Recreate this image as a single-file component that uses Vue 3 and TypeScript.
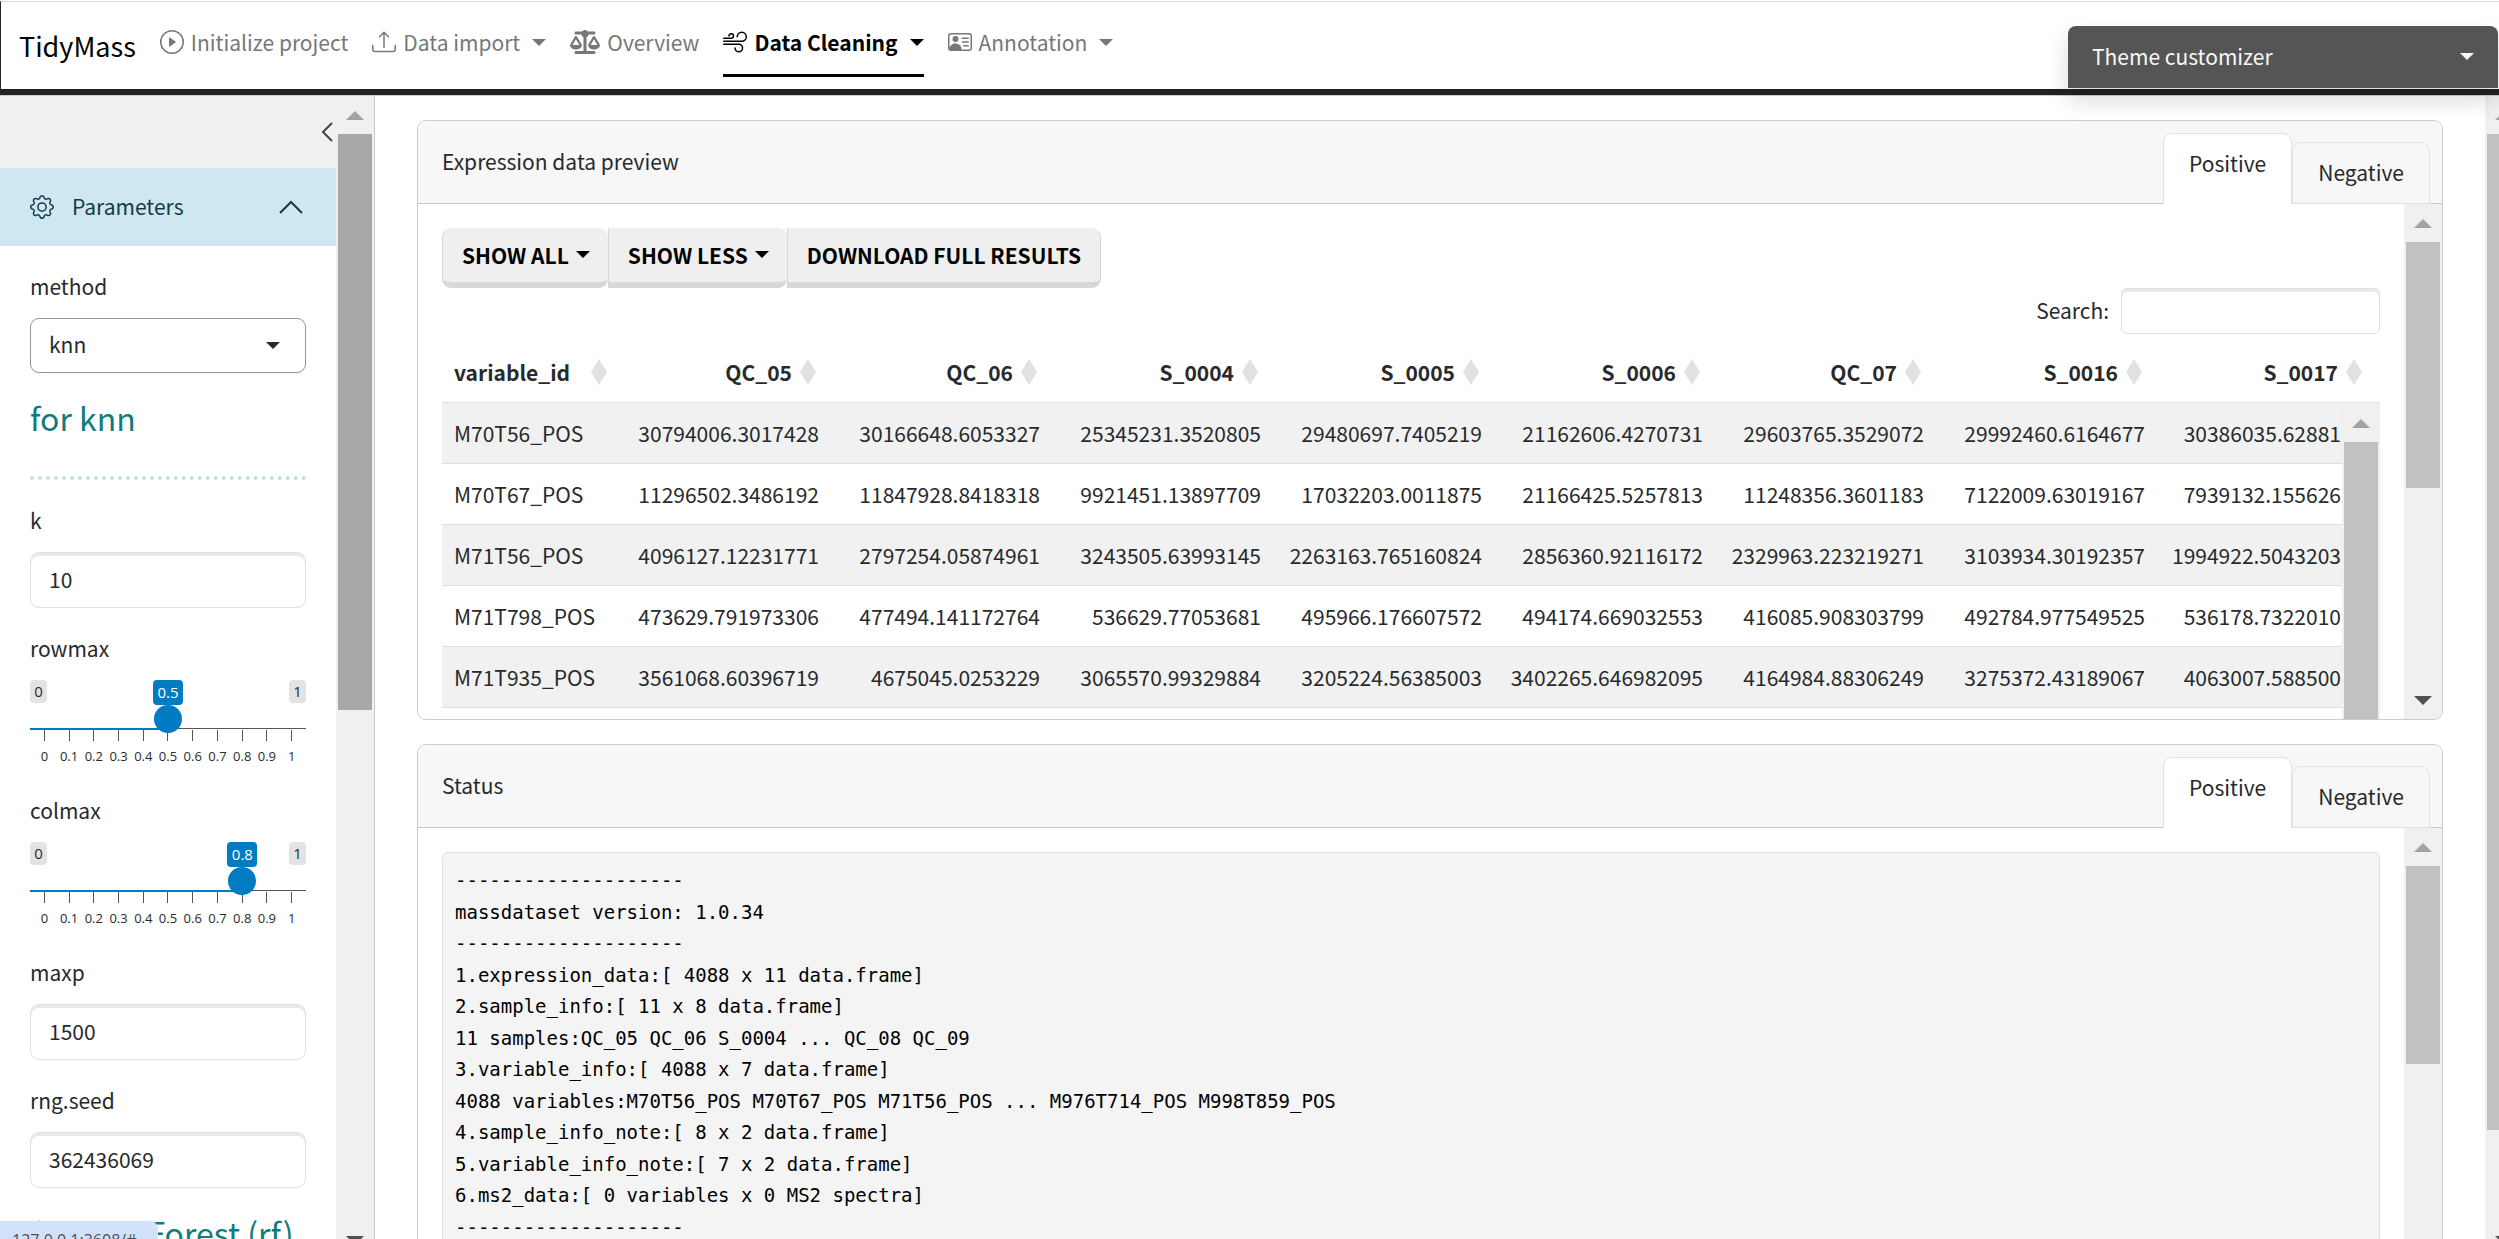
<script setup lang="ts">
import { ref } from 'vue'

interface NavItem {
  label: string
  viewBox: string
  iconWidth: number
  paths: string[]
  menu: boolean
  active: boolean
}

const navItems: NavItem[] = [
  {
    label: 'Initialize project',
    viewBox: '0 0 16 16',
    iconWidth: 24,
    paths: [
      'M8 15A7 7 0 1 1 8 1a7 7 0 0 1 0 14m0 1A8 8 0 1 0 8 0a8 8 0 0 0 0 16',
      'M6.271 5.055a.5.5 0 0 1 .52.038l3.5 2.5a.5.5 0 0 1 0 .814l-3.5 2.5A.5.5 0 0 1 6 10.5v-5a.5.5 0 0 1 .271-.445',
    ],
    menu: false,
    active: false,
  },
  {
    label: 'Data import',
    viewBox: '0 0 16 16',
    iconWidth: 24,
    paths: [
      'M.5 9.9a.5.5 0 0 1 .5.5v2.5a1 1 0 0 0 1 1h12a1 1 0 0 0 1-1v-2.5a.5.5 0 0 1 1 0v2.5a2 2 0 0 1-2 2H2a2 2 0 0 1-2-2v-2.5a.5.5 0 0 1 .5-.5',
      'M7.646 1.146a.5.5 0 0 1 .708 0l3 3a.5.5 0 0 1-.708.708L8.5 2.707V11.5a.5.5 0 0 1-1 0V2.707L5.354 4.854a.5.5 0 1 1-.708-.708z',
    ],
    menu: true,
    active: false,
  },
  {
    label: 'Overview',
    viewBox: '0 0 640 512',
    iconWidth: 30,
    paths: [
      'M384 32H512c17.7 0 32 14.3 32 32s-14.3 32-32 32H398.4c-5.2 25.8-22.9 47.1-46.4 57.3V448H512c17.7 0 32 14.3 32 32s-14.3 32-32 32H320 128c-17.7 0-32-14.3-32-32s14.3-32 32-32H288V153.3c-23.5-10.3-41.2-31.6-46.4-57.3H128c-17.7 0-32-14.3-32-32s14.3-32 32-32H256c14.6-19.4 37.8-32 64-32s49.4 12.6 64 32zm55.6 288H584.4L512 195.8 439.6 320zM512 416c-62.9 0-115.2-34-126-78.9c-2.6-11 1-22.3 6.7-32.1l95.2-163.2c5-8.6 14.2-13.8 24.1-13.8s19.1 5.3 24.1 13.8l95.2 163.2c5.7 9.8 9.3 21.1 6.7 32.1C627.2 382 574.9 416 512 416zM126.8 195.8L54.4 320H199.3L126.8 195.8zM.9 337.1c-2.6-11 1-22.3 6.7-32.1l95.2-163.2c5-8.6 14.2-13.8 24.1-13.8s19.1 5.3 24.1 13.8l95.2 163.2c5.7 9.8 9.3 21.1 6.7 32.1C241.9 382 189.7 416 126.8 416S11.7 382 .9 337.1z',
    ],
    menu: false,
    active: false,
  },
  {
    label: 'Data Cleaning',
    viewBox: '0 0 16 16',
    iconWidth: 24,
    paths: [
      'M12.5 2A2.5 2.5 0 0 0 10 4.5a.5.5 0 0 1-1 0A3.5 3.5 0 1 1 12.5 8H.5a.5.5 0 0 1 0-1h12a2.5 2.5 0 0 0 0-5m-7 1a1 1 0 0 0-1 1 .5.5 0 0 1-1 0 2 2 0 1 1 2 2h-5a.5.5 0 0 1 0-1h5a1 1 0 0 0 0-2M0 9.5A.5.5 0 0 1 .5 9h10.042a3 3 0 1 1-3 3 .5.5 0 0 1 1 0 2 2 0 1 0 2-2H.5a.5.5 0 0 1-.5-.5',
    ],
    menu: true,
    active: true,
  },
  {
    label: 'Annotation',
    viewBox: '0 0 16 16',
    iconWidth: 24,
    paths: [
      'M5 8a2 2 0 1 0 0-4 2 2 0 0 0 0 4m4-2.5a.5.5 0 0 1 .5-.5h4a.5.5 0 0 1 0 1h-4a.5.5 0 0 1-.5-.5M9 8a.5.5 0 0 1 .5-.5h4a.5.5 0 0 1 0 1h-4A.5.5 0 0 1 9 8m1 2.5a.5.5 0 0 1 .5-.5h3a.5.5 0 0 1 0 1h-3a.5.5 0 0 1-.5-.5',
      'M2 2a2 2 0 0 0-2 2v8a2 2 0 0 0 2 2h12a2 2 0 0 0 2-2V4a2 2 0 0 0-2-2zM1 4a1 1 0 0 1 1-1h12a1 1 0 0 1 1 1v8a1 1 0 0 1-1 1H8.96q.04-.245.04-.5C9 10.567 7.21 9 5 9c-2.086 0-3.8 1.398-3.984 3.181A1 1 0 0 1 1 12z',
    ],
    menu: true,
    active: false,
  },
]

const method = ref('knn')
const k = ref('10')
const maxp = ref('1500')
const seed = ref('362436069')
const search = ref('')

const sliders = ref([
  { name: 'rowmax', value: 0.5 },
  { name: 'colmax', value: 0.8 },
])
const ticks = ['0', '0.1', '0.2', '0.3', '0.4', '0.5', '0.6', '0.7', '0.8', '0.9', '1']

// The handle is 28px wide, so its centre travels over the width less 28px.
const handleLeft = (value: number): string => `calc(14px + (100% - 28px) * ${value})`

const tabs = ['Positive', 'Negative']
const previewTab = ref('Positive')
const statusTab = ref('Positive')

const columns = ['variable_id', 'QC_05', 'QC_06', 'S_0004', 'S_0005', 'S_0006', 'QC_07', 'S_0016', 'S_0017']
const rows: string[][] = [
  ['M70T56_POS', '30794006.3017428', '30166648.6053327', '25345231.3520805', '29480697.7405219', '21162606.4270731', '29603765.3529072', '29992460.6164677', '30386035.62881'],
  ['M70T67_POS', '11296502.3486192', '11847928.8418318', '9921451.13897709', '17032203.0011875', '21166425.5257813', '11248356.3601183', '7122009.63019167', '7939132.155626'],
  ['M71T56_POS', '4096127.12231771', '2797254.05874961', '3243505.63993145', '2263163.765160824', '2856360.92116172', '2329963.223219271', '3103934.30192357', '1994922.5043203'],
  ['M71T798_POS', '473629.791973306', '477494.141172764', '536629.77053681', '495966.176607572', '494174.669032553', '416085.908303799', '492784.977549525', '536178.7322010'],
  ['M71T935_POS', '3561068.60396719', '4675045.0253229', '3065570.99329884', '3205224.56385003', '3402265.646982095', '4164984.88306249', '3275372.43189067', '4063007.588500'],
]

const rule = '-'.repeat(20)
const statusText = [
  rule,
  'massdataset version: 1.0.34',
  rule,
  '1.expression_data:[ 4088 x 11 data.frame]',
  '2.sample_info:[ 11 x 8 data.frame]',
  '11 samples:QC_05 QC_06 S_0004 ... QC_08 QC_09',
  '3.variable_info:[ 4088 x 7 data.frame]',
  '4088 variables:M70T56_POS M70T67_POS M71T56_POS ... M976T714_POS M998T859_POS',
  '4.sample_info_note:[ 8 x 2 data.frame]',
  '5.variable_info_note:[ 7 x 2 data.frame]',
  '6.ms2_data:[ 0 variables x 0 MS2 spectra]',
  rule,
].join('\n')
</script>

<template>
  <div class="shell">
    <header class="topbar">
      <a class="brand" href="#">TidyMass</a>
      <nav class="nav">
        <a v-for="item in navItems" :key="item.label" href="#" class="nav-item" :class="{ active: item.active }">
          <svg class="nav-icon" :viewBox="item.viewBox" :width="item.iconWidth" height="24" fill="currentColor" aria-hidden="true">
            <path v-for="d in item.paths" :key="d" :d="d" />
          </svg>
          <span>{{ item.label }}</span>
          <i v-if="item.menu" class="caret nav-caret"></i>
        </a>
      </nav>
    </header>

    <button type="button" class="customizer">
      <span>Theme customizer</span>
      <i class="caret"></i>
    </button>

    <div class="workspace">
      <aside class="sidebar">
        <div class="sidebar-scroll">
          <div class="sidebar-top">
            <button type="button" class="collapse" aria-label="Toggle sidebar">
              <svg viewBox="0 0 12 20" width="12" height="20" fill="none" stroke="#444" stroke-width="2" aria-hidden="true">
                <path d="M11 1 2 10l9 9" />
              </svg>
            </button>
          </div>
          <button type="button" class="accordion">
            <svg viewBox="0 0 16 16" width="24" height="24" fill="currentColor" aria-hidden="true">
              <path d="M8 4.754a3.246 3.246 0 1 0 0 6.492 3.246 3.246 0 0 0 0-6.492M5.754 8a2.246 2.246 0 1 1 4.492 0 2.246 2.246 0 0 1-4.492 0" />
              <path d="M9.796 1.343c-.527-1.79-3.065-1.79-3.592 0l-.094.319a.873.873 0 0 1-1.255.52l-.292-.16c-1.64-.892-3.433.902-2.54 2.541l.159.292a.873.873 0 0 1-.52 1.255l-.319.094c-1.79.527-1.79 3.065 0 3.592l.319.094a.873.873 0 0 1 .52 1.255l-.16.292c-.892 1.64.901 3.434 2.541 2.54l.292-.159a.873.873 0 0 1 1.255.52l.094.319c.527 1.79 3.065 1.79 3.592 0l.094-.319a.873.873 0 0 1 1.255-.52l.292.16c1.64.893 3.434-.902 2.54-2.541l-.159-.292a.873.873 0 0 1 .52-1.255l.319-.094c1.79-.527 1.79-3.065 0-3.592l-.319-.094a.873.873 0 0 1-.52-1.255l.16-.292c.893-1.64-.902-3.433-2.541-2.54l-.292.159a.873.873 0 0 1-1.255-.52zm-2.633.283c.246-.835 1.428-.835 1.674 0l.094.319a1.873 1.873 0 0 0 2.693 1.115l.291-.16c.764-.415 1.6.42 1.184 1.185l-.159.292a1.873 1.873 0 0 0 1.116 2.692l.318.094c.835.246.835 1.428 0 1.674l-.319.094a1.873 1.873 0 0 0-1.115 2.693l.16.291c.415.764-.42 1.6-1.185 1.184l-.291-.159a1.873 1.873 0 0 0-2.693 1.116l-.094.318c-.246.835-1.428.835-1.674 0l-.094-.319a1.873 1.873 0 0 0-2.692-1.115l-.292.16c-.764.415-1.6-.42-1.184-1.185l.159-.291A1.873 1.873 0 0 0 1.945 8.93l-.319-.094c-.835-.246-.835-1.428 0-1.674l.319-.094A1.873 1.873 0 0 0 3.06 4.377l-.16-.292c-.415-.764.42-1.6 1.185-1.184l.292.159a1.873 1.873 0 0 0 2.692-1.115z" />
            </svg>
            <span class="accordion-title">Parameters</span>
            <svg viewBox="0 0 24 14" width="24" height="14" fill="none" stroke="currentColor" stroke-width="2" aria-hidden="true">
              <path d="M1 13 12 2l11 11" />
            </svg>
          </button>

          <form class="params" @submit.prevent>
            <div class="field">
              <label for="method">method</label>
              <div class="select-wrap">
                <select id="method" v-model="method">
                  <option value="knn">knn</option>
                </select>
                <i class="caret"></i>
              </div>
            </div>

            <h4>for knn</h4>
            <hr />

            <div class="field">
              <label for="k">k</label>
              <input id="k" v-model="k" class="text-input" type="text" />
            </div>

            <div v-for="slider in sliders" :key="slider.name" class="field">
              <label :for="slider.name">{{ slider.name }}</label>
              <div class="slider">
                <div class="limits">
                  <span>0</span>
                  <span>1</span>
                </div>
                <span class="bubble" :style="{ left: handleLeft(slider.value) }">{{ slider.value }}</span>
                <input :id="slider.name" v-model.number="slider.value" type="range" min="0" max="1" step="0.1" />
                <div class="rail">
                  <div class="rail-fill" :style="{ width: handleLeft(slider.value) }"></div>
                </div>
                <div class="ticks">
                  <span v-for="tick in ticks" :key="tick">{{ tick }}</span>
                </div>
              </div>
            </div>

            <div class="field">
              <label for="maxp">maxp</label>
              <input id="maxp" v-model="maxp" class="text-input" type="text" />
            </div>
            <div class="field">
              <label for="seed">rng.seed</label>
              <input id="seed" v-model="seed" class="text-input" type="text" />
            </div>

            <h4>for missForest (rf)</h4>
          </form>
        </div>
        <div class="scrollbar" aria-hidden="true">
          <i class="arrow up"></i>
          <div class="thumb hovered" style="height: 576px"></div>
          <i class="arrow down"></i>
        </div>
      </aside>

      <main class="main">
        <section class="card">
          <div class="card-header">
            <span class="card-title">Expression data preview</span>
            <div class="tabs" role="tablist">
              <button v-for="tab in tabs" :key="tab" type="button" role="tab" class="tab" :class="{ selected: tab === previewTab }" @click="previewTab = tab">{{ tab }}</button>
            </div>
          </div>
          <div class="card-body">
            <div class="card-content">
              <div class="button-group">
                <button type="button">SHOW ALL<i class="caret"></i></button>
                <button type="button">SHOW LESS<i class="caret"></i></button>
                <button type="button">DOWNLOAD FULL RESULTS</button>
              </div>
              <div class="search">
                <label for="search">Search:</label>
                <input id="search" v-model="search" type="search" />
              </div>
              <div class="table-wrap">
                <table>
                  <colgroup>
                    <col class="col-id" />
                    <col class="col-first" />
                    <col v-for="n in 6" :key="n" class="col-sample" />
                    <col />
                  </colgroup>
                  <thead>
                    <tr>
                      <th v-for="column in columns" :key="column" scope="col">
                        <div class="th-inner">
                          <span>{{ column }}</span>
                          <svg viewBox="0 0 16 26" width="16" height="26" fill="#e1e1e1" aria-hidden="true">
                            <path d="M8 0l8 13-8 13L0 13z" />
                          </svg>
                        </div>
                      </th>
                    </tr>
                  </thead>
                  <tbody>
                    <tr v-for="row in rows" :key="row[0]">
                      <td v-for="(cell, i) in row" :key="i">{{ cell }}</td>
                    </tr>
                  </tbody>
                </table>
                <div class="scrollbar table-scrollbar" aria-hidden="true">
                  <i class="arrow up"></i>
                  <div class="thumb fill"></div>
                </div>
              </div>
            </div>
            <div class="scrollbar" aria-hidden="true">
              <i class="arrow up"></i>
              <div class="thumb" style="height: 246px"></div>
              <i class="arrow down"></i>
            </div>
          </div>
        </section>

        <section class="card">
          <div class="card-header">
            <span class="card-title">Status</span>
            <div class="tabs" role="tablist">
              <button v-for="tab in tabs" :key="tab" type="button" role="tab" class="tab" :class="{ selected: tab === statusTab }" @click="statusTab = tab">{{ tab }}</button>
            </div>
          </div>
          <div class="card-body">
            <div class="card-content">
              <pre>{{ statusText }}</pre>
            </div>
            <div class="scrollbar" aria-hidden="true">
              <i class="arrow up"></i>
              <div class="thumb" style="height: 198px"></div>
              <i class="arrow down"></i>
            </div>
          </div>
        </section>
      </main>

      <div class="scrollbar page-scrollbar" aria-hidden="true">
        <i class="arrow up"></i>
        <div class="thumb" style="height: 996px"></div>
        <i class="arrow down"></i>
      </div>
    </div>

    <div class="link-preview">127.0.0.1:3608/#</div>
  </div>
</template>

<style>
body {
  background: #fff;
}
</style>

<style scoped>
* {
  box-sizing: border-box;
}

.shell {
  position: relative;
  display: flex;
  flex-direction: column;
  height: 100vh;
  padding-top: 1px;
  overflow: hidden;
  background: #fff;
  color: #272a2c;
  font-family: 'Noto Sans CJK SC', 'Noto Sans', sans-serif;
  font-size: 21px;
  line-height: 36px;
}

button,
input,
select {
  margin: 0;
  font: inherit;
  color: inherit;
}

.caret {
  flex: none;
  display: inline-block;
  width: 0;
  height: 0;
  border: 7px solid transparent;
  border-top-color: currentColor;
  border-bottom: 0;
}

/* top bar */
.topbar {
  flex: none;
  display: flex;
  align-items: center;
  gap: 24px;
  height: 94px;
  padding-left: 18px;
  border-top: 1px solid #ddd;
  border-left: 1px solid #222;
  border-bottom: 6px solid #222;
}

.brand {
  color: #000;
  font-size: 27px;
  text-decoration: none;
}

.nav {
  display: flex;
  gap: 24px;
}

.nav-item {
  display: flex;
  align-items: center;
  gap: 7px;
  padding: 10px 0 14px;
  border-bottom: 3px solid transparent;
  color: #777;
  text-decoration: none;
}

.nav-item.active {
  border-bottom-color: #000;
  color: #000;
  font-weight: 700;
}

.nav-caret {
  margin-left: 5px;
}

.customizer {
  position: absolute;
  top: 26px;
  right: 1px;
  z-index: 2;
  display: flex;
  align-items: center;
  justify-content: space-between;
  width: 430px;
  height: 62px;
  padding: 0 24px 2px;
  border: 0;
  border-radius: 8px 8px 0 0;
  background: #555;
  color: #f8f8f8;
  box-shadow: 0 12px 24px rgba(0, 0, 0, 0.15);
}

/* scroll bars */
.scrollbar {
  flex: none;
  display: flex;
  flex-direction: column;
  width: 38px;
  background: #f0f0f0;
}

.thumb {
  flex: none;
  margin: 0 2px;
  background: #c1c1c1;
}

.thumb.hovered {
  background: #a8a8a8;
}

.thumb.fill {
  flex: 1;
}

.arrow {
  flex: none;
  display: flex;
  align-items: center;
  justify-content: center;
  height: 38px;
}

.arrow::before {
  content: '';
  border: 9px solid transparent;
}

.arrow.up::before {
  border-top: 0;
  border-bottom-color: #a3a3a3;
}

.arrow.down {
  margin-top: auto;
}

.arrow.down::before {
  border-bottom: 0;
  border-top-color: #505050;
}

/* the workspace runs a little past the right and bottom edges of the window */
.workspace {
  flex: 1;
  display: flex;
  min-height: 0;
  margin: 0 -24px -20px 0;
  border-top: 1px solid #ccc;
}

/* sidebar */
.sidebar {
  flex: none;
  display: flex;
  width: 375px;
  border-right: 1px solid #c8c8c8;
}

.sidebar-scroll {
  flex: 1;
  overflow: hidden;
}

.sidebar-top {
  display: flex;
  justify-content: flex-end;
  align-items: center;
  height: 72px;
  padding-right: 3px;
  background: #f1f1f1;
}

.collapse {
  display: flex;
  padding: 0;
  border: 0;
  background: none;
}

.accordion {
  display: flex;
  align-items: center;
  gap: 18px;
  width: 100%;
  height: 78px;
  padding: 0 33px 0 30px;
  border: 0;
  background: #cfe7f1;
  color: #123c4a;
}

.accordion-title {
  flex: 1;
  padding-bottom: 2px;
  text-align: left;
}

.params {
  display: flex;
  flex-direction: column;
  gap: 22px;
  padding: 22px 30px;
}

.field {
  display: flex;
  flex-direction: column;
  gap: 14px;
}

.select-wrap {
  display: flex;
  align-items: center;
  position: relative;
}

.select-wrap select {
  width: 100%;
  height: 55px;
  padding: 0 18px 3px;
  appearance: none;
  border: 1px solid #8d959e;
  border-radius: 9px;
  background: #fff;
}

.select-wrap .caret {
  position: absolute;
  right: 26px;
  pointer-events: none;
}

.text-input {
  width: 100%;
  height: 56px;
  padding: 0 18px 2px;
  border: 1px solid #dfe0e6;
  border-radius: 9px;
  background: #fff;
  box-shadow: inset 0 3px 0 #ebebeb;
}

h4 {
  margin: 0;
  color: #0f7c7c;
  font-size: 32px;
  font-weight: 400;
  line-height: 44px;
  white-space: nowrap;
}

hr {
  width: 100%;
  margin: 15px 0 0;
  border: 0;
  border-top: 4px dotted #c3dfdf;
}

.slider {
  position: relative;
  height: 90px;
  font-family: 'Open Sans', sans-serif;
}

.limits {
  display: flex;
  justify-content: space-between;
  margin-bottom: 2px;
}

.limits span {
  width: 17px;
  border-radius: 4px;
  background: #e3e3e3;
  font-size: 15px;
  line-height: 23px;
  text-align: center;
}

.bubble {
  position: absolute;
  top: 0;
  width: 30px;
  border-radius: 4px;
  background: #017bc2;
  color: #fff;
  font-size: 15px;
  line-height: 25px;
  text-align: center;
  transform: translateX(-50%);
}

.slider input {
  position: relative;
  z-index: 1;
  display: block;
  width: 100%;
  height: 28px;
  appearance: none;
  background: none;
}

.slider input::-webkit-slider-thumb {
  width: 28px;
  height: 28px;
  appearance: none;
  border-radius: 50%;
  background: #017bc2;
}

.rail {
  height: 2px;
  margin-top: -5px;
  border-top: 1px solid #555;
}

.rail-fill {
  height: 2px;
  margin-top: -1px;
  background: #017bc2;
}

.ticks {
  display: grid;
  grid-template-columns: repeat(11, 1fr);
  padding: 0 2px;
}

.ticks span {
  display: flex;
  flex-direction: column;
  align-items: center;
  font-size: 13px;
  line-height: 30px;
}

.ticks span::before {
  content: '';
  width: 1px;
  height: 11px;
  background: #555;
}

/* cards */
.main {
  flex: 1;
  display: flex;
  flex-direction: column;
  gap: 24px;
  min-width: 0;
  padding: 24px 42px;
  overflow: hidden;
}

.card {
  flex: none;
  display: flex;
  flex-direction: column;
  height: 600px;
  border: 1px solid #ccc;
  border-radius: 9px;
  overflow: hidden;
}

.card-header {
  flex: none;
  display: flex;
  align-items: center;
  justify-content: space-between;
  height: 83px;
  padding: 0 12px 0 24px;
  border-bottom: 1px solid #c8c8c8;
  background: #f7f7f7;
}

.card-title {
  padding-bottom: 2px;
}

.tabs {
  display: flex;
  align-items: flex-end;
  align-self: flex-end;
  margin-bottom: -1px;
}

.tab {
  height: 62px;
  padding: 0 25px 2px;
  border: 1px solid #dee2e6;
  border-radius: 9px 9px 0 0;
  background: #f7f7f7;
}

.tab.selected {
  height: 71px;
  padding-bottom: 11px;
  border-bottom-color: #fff;
  background: #fff;
}

.card-body {
  flex: 1;
  display: flex;
  min-height: 0;
}

.card-content {
  flex: 1;
  display: flex;
  flex-direction: column;
  min-width: 0;
  padding: 24px 24px 0;
  overflow: hidden;
}

.button-group {
  display: flex;
}

.button-group button {
  display: flex;
  align-items: center;
  gap: 7px;
  height: 60px;
  padding: 0 18px 2px 19px;
  border: 1px solid #d8d8d8;
  border-top-color: #efefef;
  border-bottom: 6px solid #d8d8d8;
  border-right-width: 0;
  border-radius: 9px;
  background: #efefef;
  color: #000;
  font-weight: 700;
}

.button-group button + button {
  border-top-left-radius: 0;
  border-bottom-left-radius: 0;
}

.button-group button:last-child {
  padding-right: 19px;
  border-right-width: 1px;
}

.search {
  display: flex;
  align-items: center;
  justify-content: flex-end;
  gap: 12px;
}

.search label {
  padding-bottom: 2px;
}

.search input {
  width: 259px;
  height: 46px;
  padding: 0 12px;
  border: 1px solid #dfe0e6;
  border-radius: 6px;
  background: #fff;
  box-shadow: inset 0 3px 0 #ebebeb;
}

.table-wrap {
  position: relative;
  flex: 1;
  padding-top: 8px;
  min-height: 0;
}

table {
  width: 100%;
  table-layout: fixed;
  border-spacing: 0;
}

.col-id {
  width: 180px;
}

.col-first {
  width: 209px;
}

.col-sample {
  width: 221px;
}

th,
td {
  height: 61px;
  padding: 0 12px 0 0;
  border-bottom: 1px solid #dee0e2;
  text-align: right;
  white-space: nowrap;
}

th {
  padding-right: 15px;
}

th:first-child,
td:first-child {
  padding-left: 12px;
  text-align: left;
}

th:last-child {
  padding-right: 18px;
}

td:last-child {
  padding-right: 39px;
}

.th-inner {
  display: flex;
  align-items: center;
  justify-content: flex-end;
  gap: 8px;
}

th:first-child .th-inner {
  justify-content: space-between;
}

tbody tr:nth-child(odd) td {
  background: #f1f1f1;
}

.table-scrollbar {
  position: absolute;
  top: 70px;
  right: 0;
  bottom: 0;
}

pre {
  flex: 1;
  margin: 0;
  padding: 12px;
  border: 1px solid #dee0e2;
  border-radius: 6px;
  background: #f4f4f4;
  color: #000;
  font-family: 'DejaVu Sans Mono', monospace;
  font-size: 19px;
  line-height: 1.66;
}

.link-preview {
  position: absolute;
  left: 0;
  bottom: 0;
  width: 158px;
  height: 18px;
  padding: 4px 12px;
  border-radius: 0 8px 0 0;
  background: #d2e1fa;
  color: #4c5057;
  font-family: 'Open Sans', sans-serif;
  font-size: 16px;
  line-height: 30px;
  white-space: nowrap;
  overflow: hidden;
}
</style>
